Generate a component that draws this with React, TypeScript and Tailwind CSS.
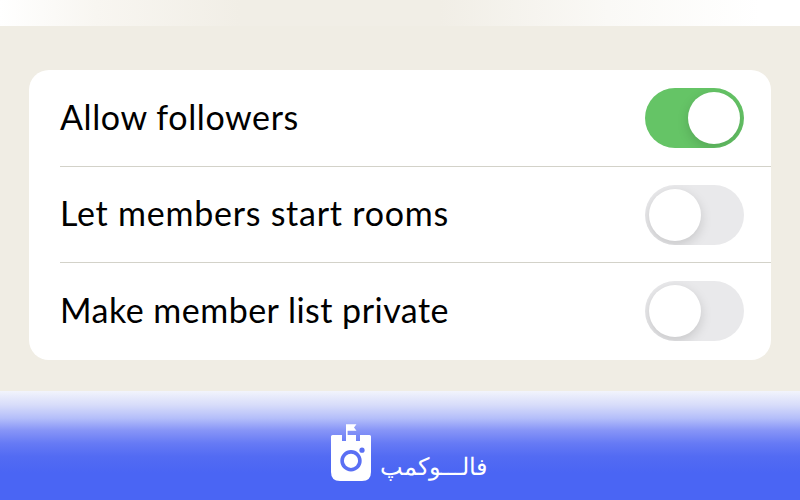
import clsx from 'clsx'
import { useState } from 'react'

const settings = [
  { label: 'Allow followers', enabled: true, tracking: 'tracking-[0.6px]' },
  { label: 'Let members start rooms', enabled: false, tracking: 'tracking-[0.76px]' },
  { label: 'Make member list private', enabled: false, tracking: 'tracking-[0.48px]' },
]

function Toggle({ label, initial }: { label: string; initial: boolean }) {
  const [on, setOn] = useState(initial)

  return (
    <button
      type="button"
      role="switch"
      aria-checked={on}
      aria-label={label}
      onClick={() => setOn(!on)}
      className={clsx(
        'flex h-[60px] w-[99px] shrink-0 items-center overflow-hidden rounded-full px-1',
        on ? 'justify-end bg-[#65c466]' : 'justify-start bg-[#e9e9eb]'
      )}
    >
      <span className="size-[52px] rounded-full bg-white shadow-[0_4px_12px_rgba(0,0,0,0.15)]" />
    </button>
  )
}

function Logo() {
  return (
    <svg width="40" height="58" viewBox="0 0 40 58" fill="none">
      {/* Flag */}
      <path d="M15 0.3H25.5L23 3.5L25.5 6.8H16.6V12H15Z" fill="white" />
      {/* Castle shaped camera body */}
      <path
        d="M1.5 11H11V17H15V11H25V17H29V11H38.5Q40 11 40 12.5V48Q40 57 31 57H9Q0 57 0 48V12.5Q0 11 1.5 11Z"
        fill="white"
      />
      <circle cx="20" cy="36.8" r="8.9" stroke="#5a6ff4" strokeWidth="3.6" />
      <circle cx="31" cy="26.2" r="2.6" fill="#5a6ff4" />
    </svg>
  )
}

export default function App() {
  return (
    <div className="flex h-[500px] w-[800px] flex-col overflow-hidden bg-[#f0ede4]">
      <div className="h-[26px] shrink-0 bg-[linear-gradient(90deg,#ffffff_0%,#f8f6f1_12%,#f1eee6_30%,#f1eee6_55%,#faf9f6_76%,#ffffff_95%)]" />

      <main className="h-[365px] shrink-0 pt-[44px] pr-[29px] pl-[29px]">
        <div className="h-[290px] rounded-[20px] bg-white pl-[31px]">
          {settings.map((item, i) => (
            <div
              key={item.label}
              className={clsx(
                'flex items-center justify-between pr-[27px]',
                i === 0 ? 'h-[97px]' : 'h-[96px]',
                i < settings.length - 1 && 'border-b border-[#d3d2c9]'
              )}
            >
              <span
                className={clsx(
                  "pb-[3px] whitespace-nowrap font-['Lato',sans-serif] text-[34px] leading-none text-black",
                  item.tracking
                )}
              >
                {item.label}
              </span>
              <Toggle label={item.label} initial={item.enabled} />
            </div>
          ))}
        </div>
      </main>

      <footer className="flex h-[109px] shrink-0 gap-[9px] bg-[linear-gradient(180deg,#f2f4fc_0%,#d7dcfa_13%,#b4befa_25%,#8795f7_36%,#667af5_48%,#536bf3_60%,#4a65f4_75%,#4a65f4_100%)] pt-[33px] pl-[331px]">
        <Logo />
        <span
          dir="rtl"
          className="mt-[29px] font-['DejaVu_Sans',sans-serif] text-[24px] leading-[28px] font-extralight whitespace-nowrap text-white"
        >
          فالـــوکمپ
        </span>
      </footer>
    </div>
  )
}
